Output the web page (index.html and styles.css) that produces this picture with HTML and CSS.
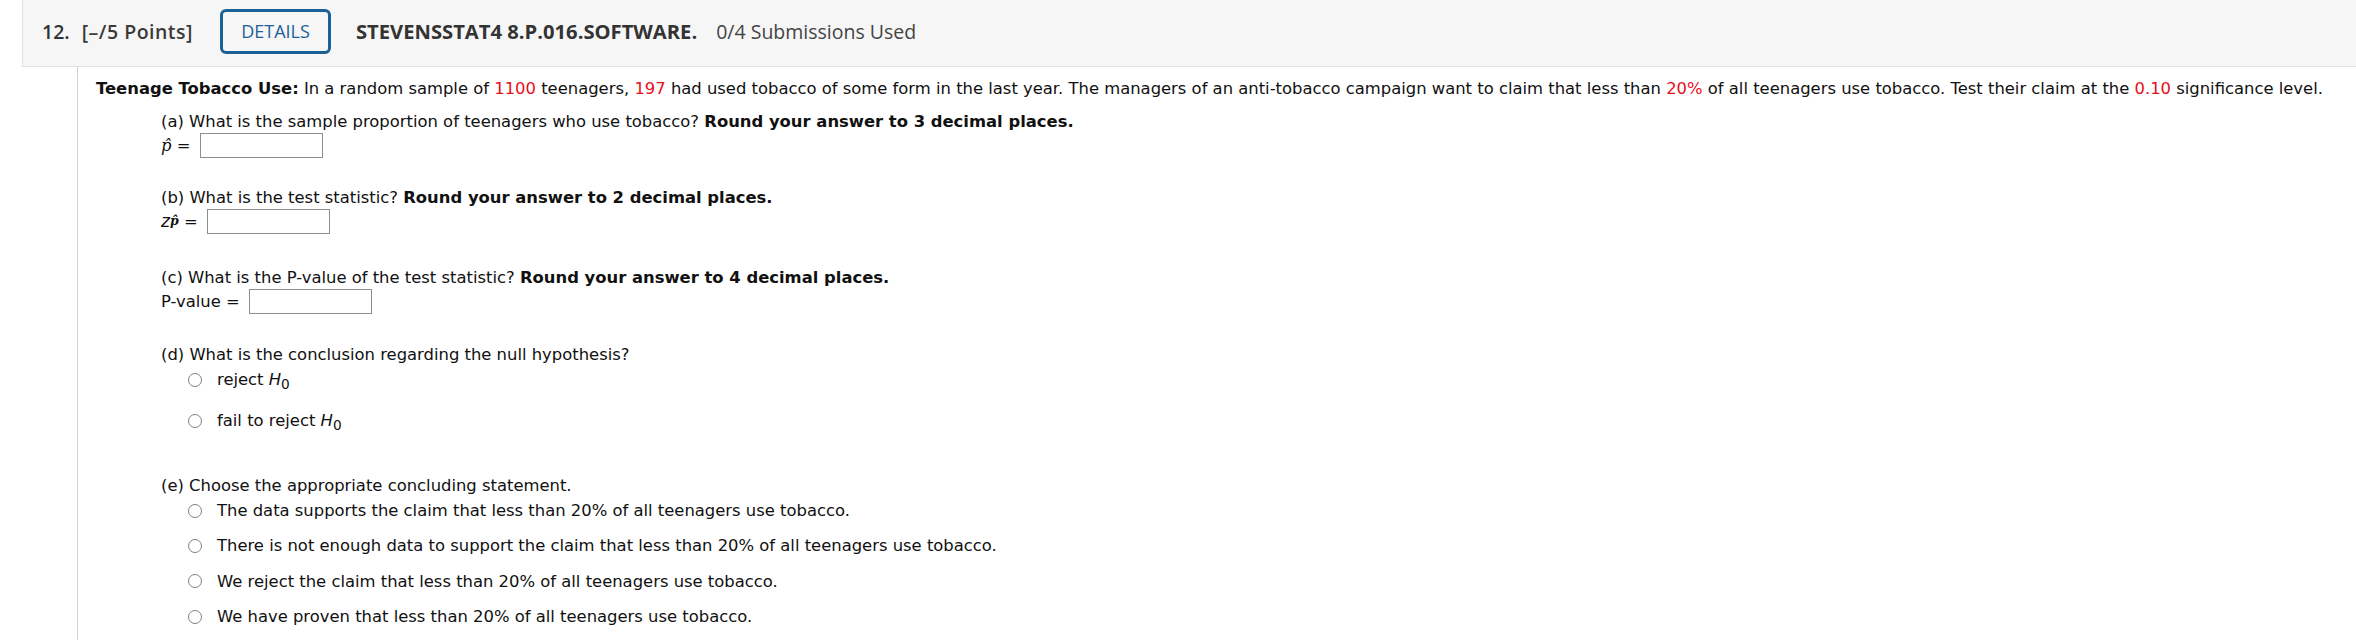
FILE: index.html
```html
<!DOCTYPE html>
<html>
<head>
<meta charset="utf-8">
<link rel="stylesheet" href="styles.css">
</head>
<body>
<div class="question">
  <div class="q-header">
    <span class="q-num">12.</span>
    <span class="q-points">[–/5 Points]</span>
    <button class="details-btn">DETAILS</button>
    <span class="q-title">STEVENSSTAT4 8.P.016.SOFTWARE.</span>
    <span class="q-subs">0/4 Submissions Used</span>
  </div>
  <div class="q-body">
    <p class="intro"><b>Teenage Tobacco Use:</b> In a random sample of <span class="red">1100</span> teenagers, <span class="red">197</span> had used tobacco of some form in the last year. The managers of an anti-tobacco campaign want to claim that less than <span class="red">20%</span> of all teenagers use tobacco. Test their claim at the <span class="red">0.10</span> significance level.</p>
    <div class="parts">
      <div class="part part-a">
        <div class="prompt">(a) What is the sample proportion of teenagers who use tobacco? <b>Round your answer to 3 decimal places.</b></div>
        <div class="answer"><i class="math">p̂</i> = <input class="ans-box" type="text"></div>
      </div>
      <div class="part part-b">
        <div class="prompt">(b) What is the test statistic? <b>Round your answer to 2 decimal places.</b></div>
        <div class="answer"><i class="zvar">z</i><sub class="math-sub"><i>p̂</i></sub> = <input class="ans-box" type="text"></div>
      </div>
      <div class="part part-c">
        <div class="prompt">(c) What is the P-value of the test statistic? <b>Round your answer to 4 decimal places.</b></div>
        <div class="answer">P-value = <input class="ans-box" type="text"></div>
      </div>
      <div class="part part-d">
        <div class="prompt">(d) What is the conclusion regarding the null hypothesis?</div>
        <ul class="choices choices-d">
          <li><span class="radio"></span><span>reject <i>H</i><sub>0</sub></span></li>
          <li><span class="radio"></span><span>fail to reject <i>H</i><sub>0</sub></span></li>
        </ul>
      </div>
      <div class="part part-e">
        <div class="prompt">(e) Choose the appropriate concluding statement.</div>
        <ul class="choices choices-e">
          <li><span class="radio"></span><span>The data supports the claim that less than 20% of all teenagers use tobacco.</span></li>
          <li><span class="radio"></span><span>There is not enough data to support the claim that less than 20% of all teenagers use tobacco.</span></li>
          <li><span class="radio"></span><span>We reject the claim that less than 20% of all teenagers use tobacco.</span></li>
          <li><span class="radio"></span><span>We have proven that less than 20% of all teenagers use tobacco.</span></li>
        </ul>
      </div>
    </div>
  </div>
</div>
</body>
</html>
```
FILE: styles.css
```css
html, body {
  margin: 0;
  padding: 0;
  background: #ffffff;
}
body {
  font-family: "DejaVu Sans", Verdana, sans-serif;
  color: #111;
}
.question {
  margin-left: 22px;
}
.q-header {
  display: flex;
  align-items: center;
  height: 62px;
  padding: 0 0 4px 19px;
  background: #f6f6f6;
  border-left: 1px solid #e2e2e2;
  border-bottom: 1px solid #e2e2e2;
  font-family: "Open Sans", sans-serif;
  font-size: 19.5px;
  color: #333;
}
.q-num {
  font-weight: 600;
}
.q-points {
  font-weight: 600;
  margin-left: 12px;
  letter-spacing: 0.5px;
  color: #3a3a3a;
}
.details-btn {
  margin-left: 27px;
  width: 111px;
  height: 45px;
  border: 3px solid #1b6196;
  border-radius: 6px;
  background: #f6f6f6;
  color: #1b6196;
  font-family: "Open Sans", sans-serif;
  font-size: 18px;
  padding: 0;
}
.q-title {
  margin-left: 25px;
  font-weight: 700;
  font-size: 20.2px;
  color: #333;
}
.q-subs {
  margin-left: 19px;
  color: #444;
  font-size: 19.5px;
}
.q-body {
  margin-left: 55px;
  border-left: 1px solid #d4d4d4;
  padding: 11px 0 20px 18px;
  font-size: 16.4px;
  line-height: 21px;
  min-height: 560px;
}
.intro {
  margin: 0;
}
.red {
  color: #e8101a;
}
.parts {
  margin-left: 65px;
}
.part {
  margin-top: 28px;
}
.part-a {
  margin-top: 12px;
}
.part-b {
  margin-top: 29px;
}
.part-c {
  margin-top: 33px;
}
.part-d {
  margin-top: 30px;
}
.part-e {
  margin-top: 34px;
}
.answer {
  height: 26px;
  display: flex;
  align-items: center;
  white-space: pre;
}
.ans-box {
  width: 123px;
  height: 25px;
  box-sizing: border-box;
  border: 1px solid #8f8f8f;
  margin: 0 0 0 4px;
  padding: 0;
}
.math {
  font-family: "DejaVu Serif", serif;
}
.zvar {
  font-size: 17px;
}
.math-sub {
  font-size: 12.5px;
  font-family: "DejaVu Serif", serif;
  font-weight: 700;
  vertical-align: -5px;
  line-height: 0;
}
sub {
  line-height: 0;
}
.choices {
  list-style: none;
  margin: 0;
  padding: 0 0 0 27px;
}
.choices li {
  display: flex;
  align-items: center;
  gap: 15px;
}
.choices-d li {
  height: 41px;
}
.choices-d li:first-child {
  margin-top: -6px;
}
.choices-e li {
  height: 35.3px;
}
.choices-e li:first-child {
  margin-top: -3px;
}
.radio {
  width: 14px;
  height: 14px;
  box-sizing: border-box;
  border: 1px solid #7f7f7f;
  border-radius: 50%;
  background: #fff;
  flex: none;
}
```
